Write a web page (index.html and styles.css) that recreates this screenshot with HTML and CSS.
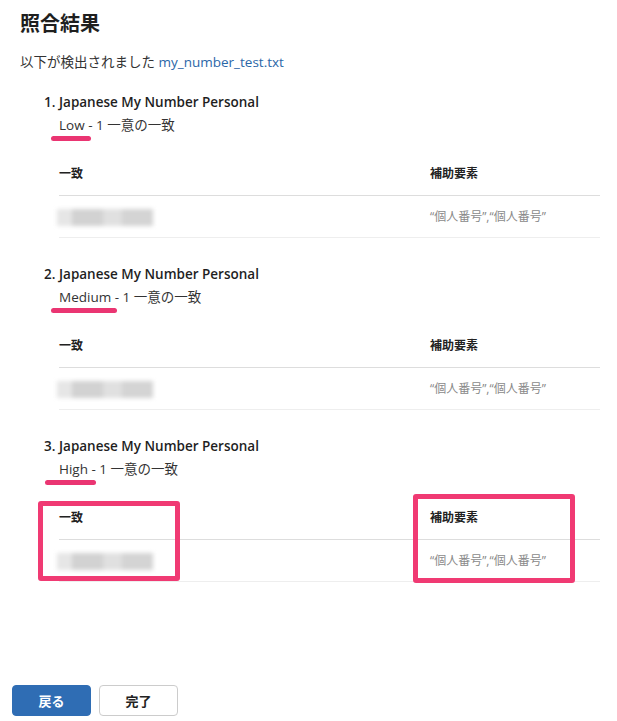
FILE: index.html
```html
<!DOCTYPE html>
<html>

<head>
    <meta charset="UTF-8">
    <title>照合結果</title>
    <link rel="stylesheet" href="styles.css">
</head>

<body>
    <main class="content">
        <h1>照合結果</h1>
        <p class="summary">以下が検出されました <a href="#" class="fileLink">my_number_test.txt</a></p>
        <ol class="matchList">
            <li class="matchItem">
                <div class="matchTitle">Japanese My Number Personal</div>
                <div class="matchLevel"><span class="level">Low</span> - 1 一意の一致</div>
                <div class="matchTable">
                    <table>
                        <thead>
                            <tr><th class="colMatch">一致</th><th>補助要素</th></tr>
                        </thead>
                        <tbody>
                            <tr>
                                <td class="colMatch"><div class="blurred"><span></span><span></span><span></span><span></span></div></td>
                                <td class="support">“個人番号”,“個人番号”</td>
                            </tr>
                        </tbody>
                    </table>
                </div>
            </li>
            <li class="matchItem">
                <div class="matchTitle">Japanese My Number Personal</div>
                <div class="matchLevel"><span class="level">Medium</span> - 1 一意の一致</div>
                <div class="matchTable">
                    <table>
                        <thead>
                            <tr><th class="colMatch">一致</th><th>補助要素</th></tr>
                        </thead>
                        <tbody>
                            <tr>
                                <td class="colMatch"><div class="blurred"><span></span><span></span><span></span><span></span></div></td>
                                <td class="support">“個人番号”,“個人番号”</td>
                            </tr>
                        </tbody>
                    </table>
                </div>
            </li>
            <li class="matchItem">
                <div class="matchTitle">Japanese My Number Personal</div>
                <div class="matchLevel"><span class="level levelWide">High</span> - 1 一意の一致</div>
                <div class="matchTable">
                    <table>
                        <thead>
                            <tr><th class="colMatch">一致</th><th>補助要素</th></tr>
                        </thead>
                        <tbody>
                            <tr>
                                <td class="colMatch"><div class="blurred"><span></span><span></span><span></span><span></span></div></td>
                                <td class="support">“個人番号”,“個人番号”</td>
                            </tr>
                        </tbody>
                    </table>
                    <div class="marker markerMatch"></div>
                    <div class="marker markerSupport"></div>
                </div>
            </li>
        </ol>
    </main>
    <footer class="actions">
        <button type="button" class="btn btnPrimary">戻る</button>
        <button type="button" class="btn">完了</button>
    </footer>
</body>

</html>
```

FILE: styles.css
```css
html {
    background: #ffffff;
    color: #222222;
    font-family: "Open Sans", "Noto Sans CJK JP", sans-serif;
    font-size: 13.5px;
}
body {
    margin: 0;
    min-height: 100vh;
    display: flex;
    flex-direction: column;
    box-sizing: border-box;
    padding: 10px 0 5px;
}
.content {
    padding: 0 20px;
}
h1 {
    margin: 0;
    font-size: 20px;
    line-height: 28px;
    font-weight: 700;
    color: #1f1f1f;
}
.summary {
    margin: 14px 0 0;
    line-height: 20px;
    color: #333333;
}
.fileLink {
    color: #2b67a8;
    text-decoration: none;
}
.matchList {
    margin: 19px 0 0;
    padding-left: 39px;
}
.matchItem + .matchItem {
    margin-top: 25px;
}
.matchTitle {
    line-height: 22px;
    font-weight: 600;
    color: #1f1f1f;
}
.matchItem::marker {
    font-weight: 600;
    color: #1f1f1f;
}
.matchLevel {
    line-height: 24px;
    color: #333333;
}
.level {
    position: relative;
    display: inline-block;
}
.level::after {
    content: "";
    position: absolute;
    left: -8px;
    right: -6px;
    top: 23px;
    height: 5px;
    border-radius: 3px;
    background: #ea3572;
}
.levelWide::after {
    left: -14px;
    right: -8px;
}
.matchTable {
    position: relative;
    margin-top: 15px;
    width: 541px;
}
table {
    width: 100%;
    border-collapse: collapse;
    font-size: 12px;
}
th {
    text-align: left;
    font-weight: 700;
    line-height: 16px;
    padding: 14px 0 13px;
    border-bottom: 1px solid #dddddd;
    color: #222222;
}
td {
    padding: 12px 0 11px;
    border-bottom: 1px solid #eeeeee;
    line-height: 18px;
    vertical-align: middle;
}
.colMatch {
    width: 371px;
}
.support {
    color: #8a8a8a;
}
.blurred {
    display: flex;
    width: 96px;
    height: 17px;
    margin-left: -2px;
    filter: blur(2px);
}
.blurred span {
    flex: 1;
    background: #dcdcdc;
}
.blurred span:nth-child(1) {
    background: #e6e6e6;
    flex: 0.5;
}
.blurred span:nth-child(2) {
    background: #d2d2d2;
}
.blurred span:nth-child(3) {
    background: #e0e0e0;
    flex: 0.6;
}
.blurred span:nth-child(4) {
    background: #d4d4d4;
}
.marker {
    position: absolute;
    border: 5px solid #f03a73;
    border-radius: 3px;
    box-sizing: border-box;
}
.markerMatch {
    left: -21px;
    top: 5px;
    width: 142px;
    height: 80px;
}
.markerSupport {
    left: 354px;
    top: -2px;
    width: 162px;
    height: 89px;
}
.actions {
    margin-top: auto;
    display: flex;
    gap: 8px;
    padding-left: 12px;
}
.btn {
    width: 79px;
    height: 31px;
    border-radius: 4px;
    border: 1px solid #cccccc;
    background: #ffffff;
    color: #222222;
    font-family: "Noto Sans CJK JP", sans-serif;
    font-size: 13px;
    font-weight: 700;
    -webkit-appearance: none;
}
.btnPrimary {
    background: #2f6db4;
    border-color: #2f6db4;
    color: #ffffff;
}
```
